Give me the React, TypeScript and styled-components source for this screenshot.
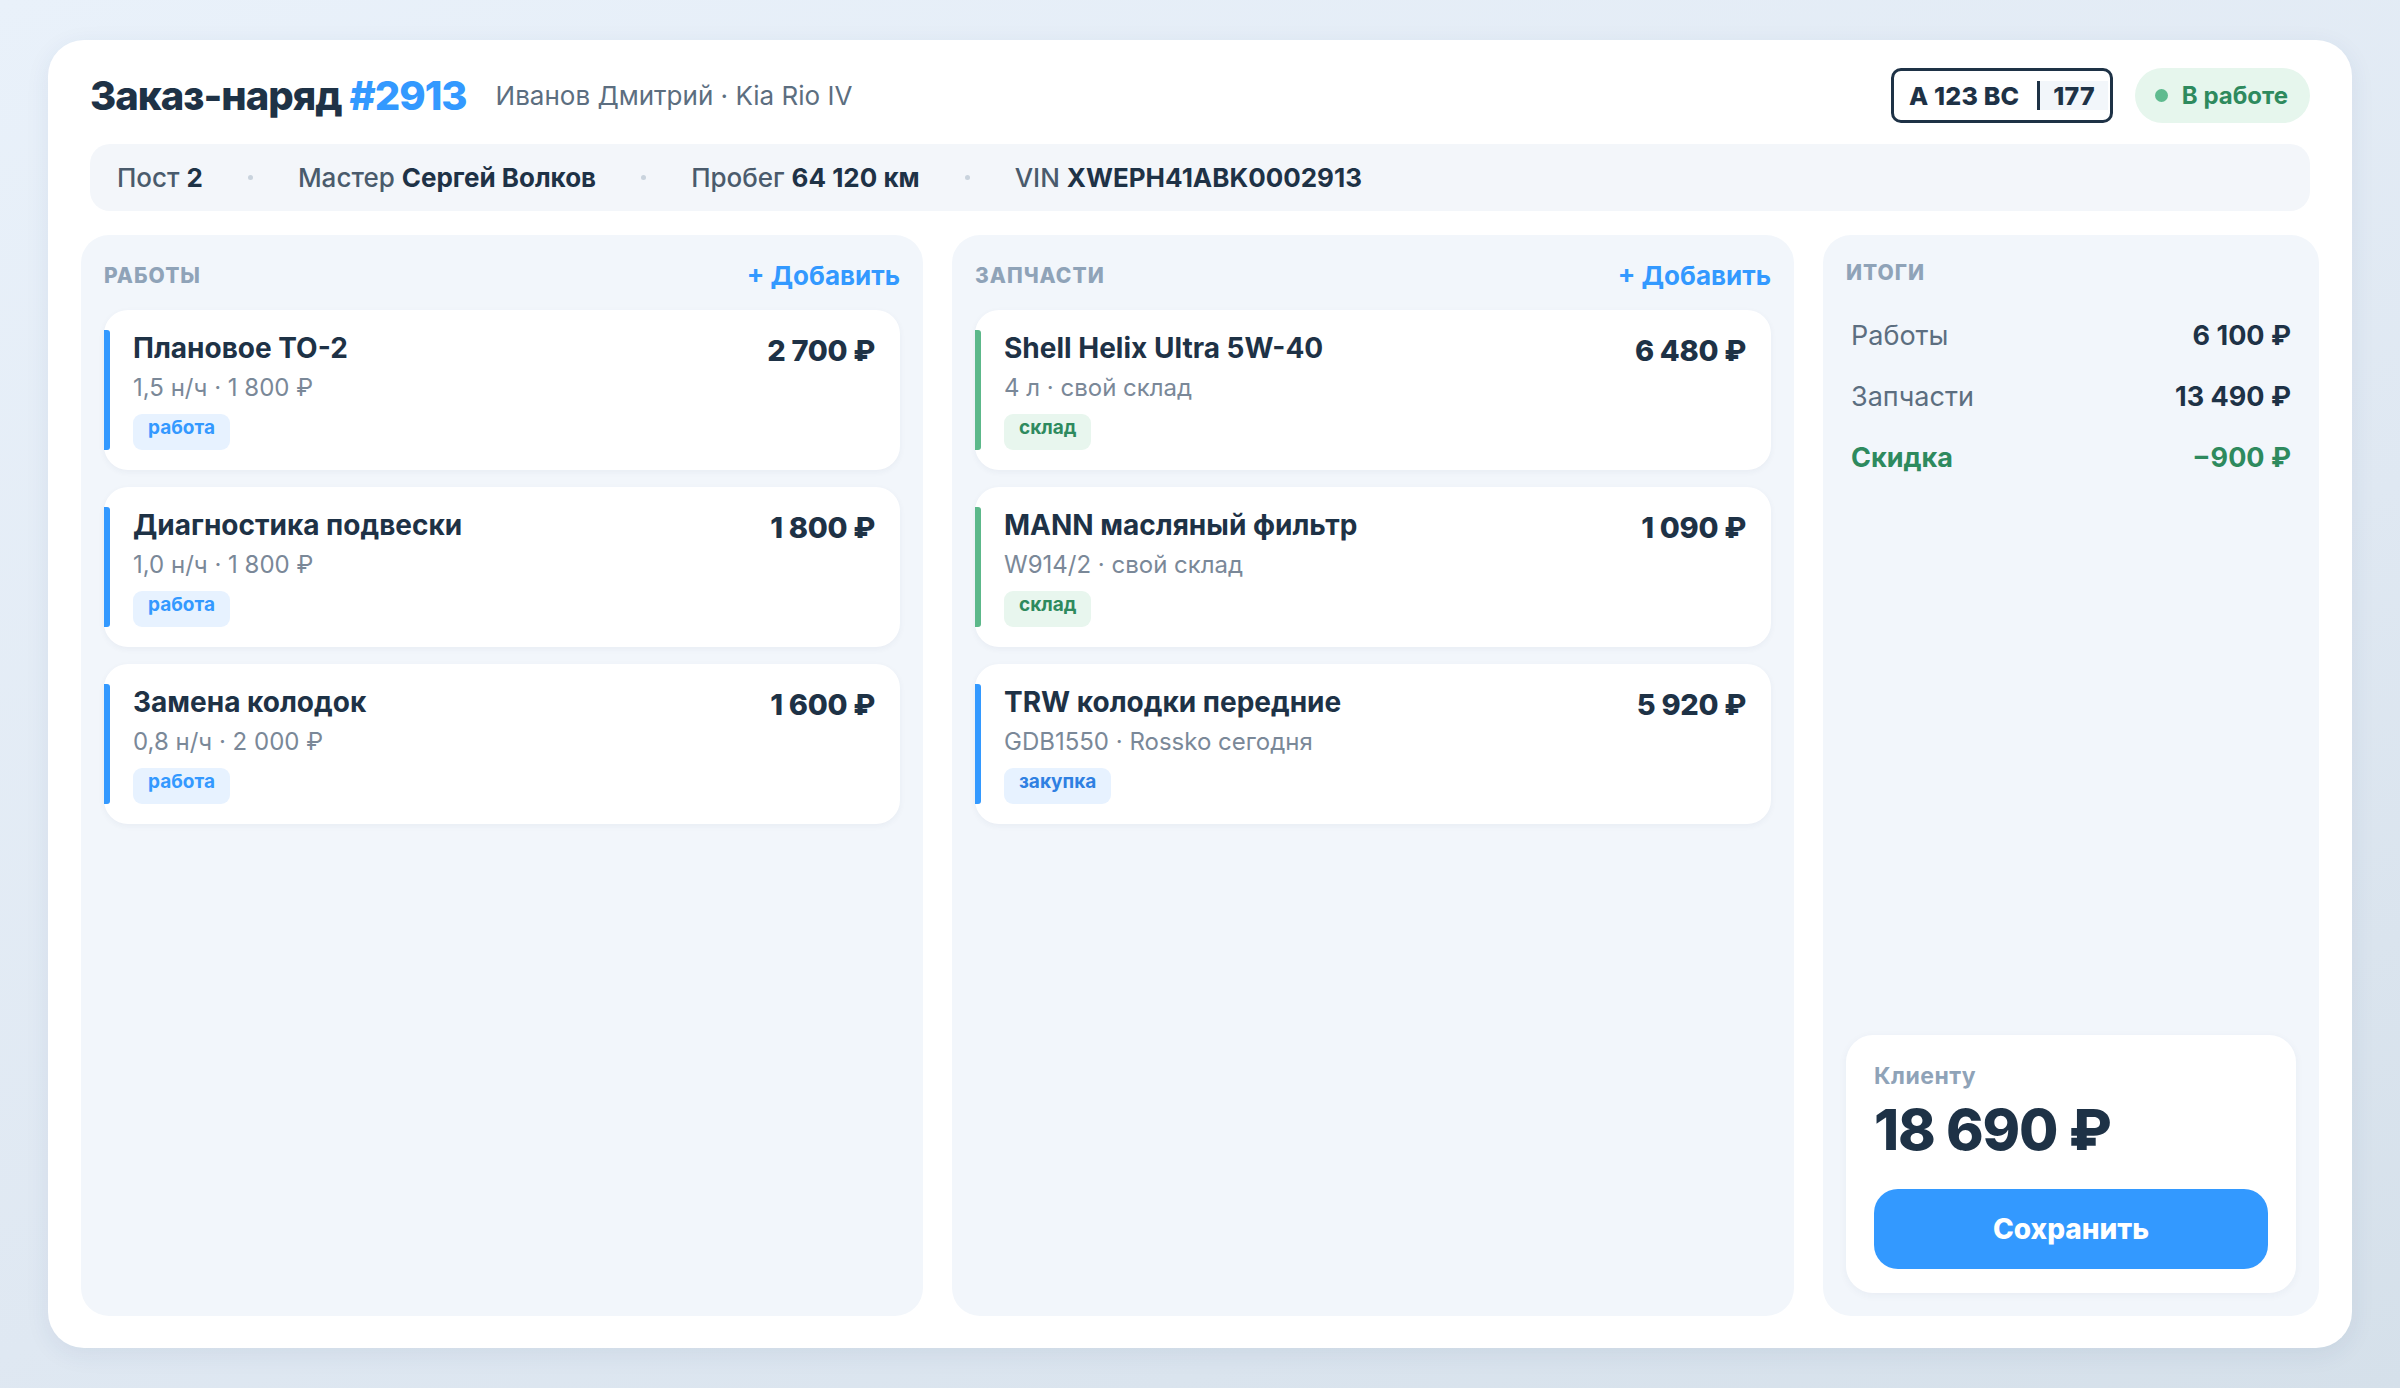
import React from 'react';
import styled, { createGlobalStyle } from 'styled-components';

type Tone = 'blue' | 'green' | 'buy';

interface LineItem {
  id: number;
  title: string;
  meta: string;
  price: string;
  tag: string;
  tone: Tone;
}

const works: LineItem[] = [
  { id: 1, title: 'Плановое ТО-2', meta: '1,5 н/ч · 1 800 ₽', price: '2 700 ₽', tag: 'работа', tone: 'blue' },
  { id: 2, title: 'Диагностика подвески', meta: '1,0 н/ч · 1 800 ₽', price: '1 800 ₽', tag: 'работа', tone: 'blue' },
  { id: 3, title: 'Замена колодок', meta: '0,8 н/ч · 2 000 ₽', price: '1 600 ₽', tag: 'работа', tone: 'blue' },
];

const parts: LineItem[] = [
  { id: 1, title: 'Shell Helix Ultra 5W-40', meta: '4 л · свой склад', price: '6 480 ₽', tag: 'склад', tone: 'green' },
  { id: 2, title: 'MANN масляный фильтр', meta: 'W914/2 · свой склад', price: '1 090 ₽', tag: 'склад', tone: 'green' },
  { id: 3, title: 'TRW колодки передние', meta: 'GDB1550 · Rossko сегодня', price: '5 920 ₽', tag: 'закупка', tone: 'buy' },
];

const accent: Record<Tone, string> = {
  blue: '#3399ff',
  green: '#5cb88a',
  buy: '#3399ff',
};

const tagColors: Record<Tone, { bg: string; fg: string }> = {
  blue: { bg: '#e7f2ff', fg: '#3399ff' },
  green: { bg: '#e8f6ee', fg: '#2e8a5e' },
  buy: { bg: '#e7f2ff', fg: '#2f80e2' },
};

const GlobalStyle = createGlobalStyle`
  * { box-sizing: border-box; }
  html, body { margin: 0; padding: 0; }
  body {
    font-family: Inter, "Noto Sans", "Liberation Sans", sans-serif;
    color: #1e3246;
    background: linear-gradient(160deg, #e9f1fa 0%, #dfe8f2 60%, #d5e0ea 100%);
  }
`;

const Page = styled.div`
  min-height: 100vh;
  padding: 40px 48px;
  display: flex;
`;

const Sheet = styled.div`
  flex: 1;
  background: #fff;
  border-radius: 36px;
  box-shadow: 0 6px 24px rgba(40, 70, 110, 0.08);
  padding: 28px 42px 32px;
  display: flex;
  flex-direction: column;
`;

const Header = styled.div`
  display: flex;
  align-items: center;
  justify-content: space-between;
  height: 55px;
`;

const TitleGroup = styled.div`
  display: flex;
  align-items: center;
  gap: 29px;
`;

const Title = styled.h1`
  margin: 0;
  font-size: 40px;
  font-weight: 800;
  letter-spacing: -1px;
  color: #1e3246;

  span {
    color: #3399ff;
  }
`;

const Subtitle = styled.div`
  font-size: 26px;
  color: #5c6e80;
`;

const HeaderRight = styled.div`
  display: flex;
  align-items: center;
  gap: 22px;
`;

const Plate = styled.div`
  display: flex;
  align-items: center;
  height: 55px;
  border: 3px solid #1e3246;
  border-radius: 10px;
  font-size: 25px;
  font-weight: 800;
  letter-spacing: 0.2px;
  color: #1e3246;
`;

const PlateNumber = styled.div`
  padding: 0 18px 0 15px;
`;

const PlateRegion = styled.div`
  height: 29px;
  display: flex;
  align-items: center;
  padding: 0 13px;
  margin-right: 2px;
  border-left: 3px solid #1e3246;
  background: #f2f6fa;
`;

const Status = styled.div`
  display: flex;
  align-items: center;
  gap: 14px;
  height: 55px;
  padding: 0 22px 0 20px;
  border-radius: 28px;
  background: #e6f6ed;
  color: #2e8a5e;
  font-size: 24px;
  font-weight: 700;
`;

const StatusDot = styled.span`
  width: 13px;
  height: 13px;
  border-radius: 50%;
  background: #5fbb8f;
`;

const InfoBar = styled.div`
  margin-top: 21px;
  height: 67px;
  display: flex;
  align-items: center;
  gap: 45px;
  padding: 0 27px;
  background: #f3f6fa;
  border-radius: 20px;
  font-size: 26px;
`;

const InfoItem = styled.div`
  color: #4a5b6c;
  font-weight: 500;

  b {
    color: #1e3246;
    font-weight: 700;
  }
`;

const InfoDot = styled.span`
  width: 5px;
  height: 5px;
  border-radius: 50%;
  background: #c9d3dd;
`;

const Columns = styled.div`
  flex: 1;
  margin: 24px -9px 0;
  display: grid;
  grid-template-columns: 1fr 1fr 496px;
  gap: 29px;
`;

const Panel = styled.section`
  background: #f2f6fb;
  border-radius: 28px;
  padding: 23px;
  display: flex;
  flex-direction: column;
`;

const PanelHead = styled.div<{ $raised?: boolean }>`
  height: 34px;
  margin-top: ${(p) => (p.$raised ? '-3px' : '0')};
  margin-bottom: ${(p) => (p.$raised ? '21px' : '18px')};
  display: flex;
  align-items: center;
  justify-content: space-between;
`;

const PanelTitle = styled.div`
  font-size: 21px;
  font-weight: 800;
  letter-spacing: 1px;
  text-transform: uppercase;
  color: #8fa3b8;
`;

const AddButton = styled.button`
  border: none;
  background: none;
  padding: 0;
  font-family: inherit;
  font-size: 26px;
  font-weight: 700;
  color: #3399ff;
  cursor: pointer;
`;

const List = styled.div`
  display: flex;
  flex-direction: column;
  gap: 17px;
`;

const Card = styled.div`
  display: flex;
  background: #fff;
  border-radius: 24px;
  padding: 20px 25px 20px 0;
  box-shadow: 0 2px 6px rgba(30, 60, 100, 0.05);
`;

const Accent = styled.div<{ $tone: Tone }>`
  width: 6px;
  flex-shrink: 0;
  border-radius: 0 3px 3px 0;
  background: ${(p) => accent[p.$tone]};
`;

const CardBody = styled.div`
  flex: 1;
  margin-left: 23px;
  display: flex;
  flex-direction: column;
  align-items: flex-start;
`;

const CardTop = styled.div`
  align-self: stretch;
  display: flex;
  justify-content: space-between;
  align-items: flex-start;
`;

const CardTitle = styled.div`
  font-size: 28px;
  line-height: 36px;
  font-weight: 700;
  color: #1e3246;
`;

const Price = styled.div`
  margin: 3px 0 -3px;
  font-size: 29px;
  line-height: 36px;
  font-weight: 800;
  color: #1e3246;
  letter-spacing: -0.3px;
`;

const Meta = styled.div`
  margin-top: 5px;
  font-size: 24px;
  line-height: 33px;
  color: #7a8898;
`;

const Tag = styled.span<{ $tone: Tone }>`
  margin-top: 10px;
  height: 36px;
  display: inline-flex;
  align-items: center;
  padding: 0 15px 9px;
  border-radius: 9px;
  font-size: 19px;
  font-weight: 700;
  background: ${(p) => tagColors[p.$tone].bg};
  color: ${(p) => tagColors[p.$tone].fg};
`;

const SumRow = styled.div<{ $accent?: boolean }>`
  height: 61px;
  padding: 0 5px;
  display: flex;
  align-items: center;
  justify-content: space-between;
  font-size: 27px;
  color: ${(p) => (p.$accent ? '#2e8a5e' : '#5c6e80')};
  font-weight: ${(p) => (p.$accent ? 700 : 400)};

  b {
    font-weight: 700;
    color: ${(p) => (p.$accent ? '#2e8a5e' : '#1e3246')};
  }
`;

const SumRows = styled.div`
  margin-top: -5px;
`;

const ClientBox = styled.div`
  margin-top: auto;
  background: #fff;
  border-radius: 27px;
  padding: 26px 28px 24px;
  box-shadow: 0 2px 8px rgba(30, 60, 100, 0.05);
`;

const ClientLabel = styled.div`
  font-size: 23px;
  line-height: 30px;
  font-weight: 700;
  letter-spacing: 0.5px;
  color: #8fa3b8;
`;

const ClientTotal = styled.div`
  margin-top: 5px;
  font-size: 57px;
  line-height: 68px;
  font-weight: 800;
  letter-spacing: -1.2px;
  color: #1e3246;
`;

const SaveButton = styled.button`
  margin-top: 25px;
  width: 100%;
  height: 80px;
  border: none;
  border-radius: 24px;
  background: #3399ff;
  color: #fff;
  font-family: inherit;
  font-size: 28px;
  font-weight: 800;
  cursor: pointer;
`;

const ItemCard: React.FC<{ item: LineItem }> = ({ item }) => (
  <Card>
    <Accent $tone={item.tone} />
    <CardBody>
      <CardTop>
        <CardTitle>{item.title}</CardTitle>
        <Price>{item.price}</Price>
      </CardTop>
      <Meta>{item.meta}</Meta>
      <Tag $tone={item.tone}>{item.tag}</Tag>
    </CardBody>
  </Card>
);

const ItemPanel: React.FC<{ title: string; items: LineItem[] }> = ({ title, items }) => (
  <Panel>
    <PanelHead>
      <PanelTitle>{title}</PanelTitle>
      <AddButton>+ Добавить</AddButton>
    </PanelHead>
    <List>
      {items.map((item) => (
        <ItemCard key={item.id} item={item} />
      ))}
    </List>
  </Panel>
);

const App: React.FC = () => {
  return (
    <>
      <GlobalStyle />
      <Page>
        <Sheet>
          <Header>
            <TitleGroup>
              <Title>
                Заказ-наряд <span>#2913</span>
              </Title>
              <Subtitle>Иванов Дмитрий · Kia Rio IV</Subtitle>
            </TitleGroup>
            <HeaderRight>
              <Plate>
                <PlateNumber>А 123 ВС</PlateNumber>
                <PlateRegion>177</PlateRegion>
              </Plate>
              <Status>
                <StatusDot />
                В работе
              </Status>
            </HeaderRight>
          </Header>

          <InfoBar>
            <InfoItem>
              Пост <b>2</b>
            </InfoItem>
            <InfoDot />
            <InfoItem>
              Мастер <b>Сергей Волков</b>
            </InfoItem>
            <InfoDot />
            <InfoItem>
              Пробег <b>64 120 км</b>
            </InfoItem>
            <InfoDot />
            <InfoItem>
              VIN <b>XWEPH41ABK0002913</b>
            </InfoItem>
          </InfoBar>

          <Columns>
            <ItemPanel title="Работы" items={works} />
            <ItemPanel title="Запчасти" items={parts} />
            <Panel>
              <PanelHead $raised>
                <PanelTitle>Итоги</PanelTitle>
              </PanelHead>
              <SumRows>
                <SumRow>
                  <span>Работы</span>
                  <b>6 100 ₽</b>
                </SumRow>
                <SumRow>
                  <span>Запчасти</span>
                  <b>13 490 ₽</b>
                </SumRow>
                <SumRow $accent>
                  <span>Скидка</span>
                  <b>−900 ₽</b>
                </SumRow>
              </SumRows>
              <ClientBox>
                <ClientLabel>Клиенту</ClientLabel>
                <ClientTotal>18 690 ₽</ClientTotal>
                <SaveButton>Сохранить</SaveButton>
              </ClientBox>
            </Panel>
          </Columns>
        </Sheet>
      </Page>
    </>
  );
};

export default App;
